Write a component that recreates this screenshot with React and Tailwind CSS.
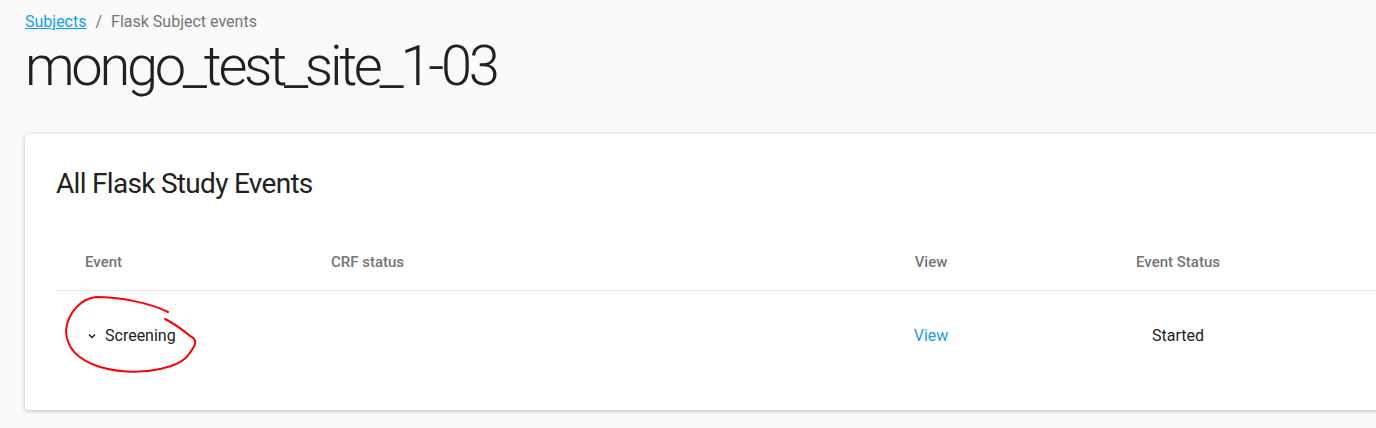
import React from 'react';

const Chevron = () => (
  <svg width="10" height="10" viewBox="0 0 10 10" className="mr-2">
    <path d="M2 3.5 L5 6.5 L8 3.5" fill="none" stroke="#212121" strokeWidth="1.4" />
  </svg>
);

const App = () => {
  return (
    <div
      className="w-[1376px] h-[428px] overflow-hidden bg-[#fafafa] relative"
      style={{ fontFamily: 'Roboto, "Noto Sans", sans-serif' }}
    >
      <div className="pl-[25px] pt-[12px]">
        {/* breadcrumb */}
        <div className="flex items-center text-[16px] leading-[20px] text-[#757575]">
          <a href="#" className="text-[#0aa0f5] underline">Subjects</a>
          <span className="mx-[9px]">/</span>
          <span>Flask Subject events</span>
        </div>
        <h1 className="text-[56px] font-light leading-[64px] text-[#212121] tracking-[-3.3px] mt-[2px]">
          mongo_test_site_1-03
        </h1>
      </div>

      {/* card */}
      <div className="ml-[25px] mt-[36px] w-[1400px] bg-white rounded-[4px] shadow-[0_1px_4px_rgba(0,0,0,0.25)] pt-[33px] pb-[30px] pl-[31px]">
        <h2 className="text-[28px] leading-[34px] text-[#212121] tracking-[-0.7px]">All Flask Study Events</h2>

        <div className="mt-[34px]">
          <div className="grid grid-cols-[247px_558px_140px_354px] h-[56px] items-center border-b border-[#e5e5e5] text-[15px] font-medium text-[#757575]">
            <div className="pl-[29px]">Event</div>
            <div className="pl-[28px]">CRF status</div>
            <div className="text-center">View</div>
            <div className="text-center">Event Status</div>
          </div>
          <div className="grid grid-cols-[247px_558px_140px_354px] h-[89px] items-center text-[16px] text-[#212121]">
            <div className="pl-[31px] flex items-center">
              <Chevron />
              <span>Screening</span>
            </div>
            <div></div>
            <div className="text-center">
              <a href="#" className="text-[#1e9bf0]">View</a>
            </div>
            <div className="text-center">Started</div>
          </div>
        </div>
      </div>

      {/* red annotation */}
      <svg className="absolute left-0 top-0 pointer-events-none" width="1376" height="428">
        <path
          d="M168 312 C150 303 120 297 96 297 C80 299 68 313 66 330 C66 348 78 360 100 367 C118 372 138 374 160 369 C174 366 184 362 189 354 C195 346 199 340 190 336 C183 330 175 324 165 319"
          fill="none"
          stroke="#f00"
          strokeWidth="2"
          strokeLinecap="round"
        />
      </svg>
    </div>
  );
};

export default App;
